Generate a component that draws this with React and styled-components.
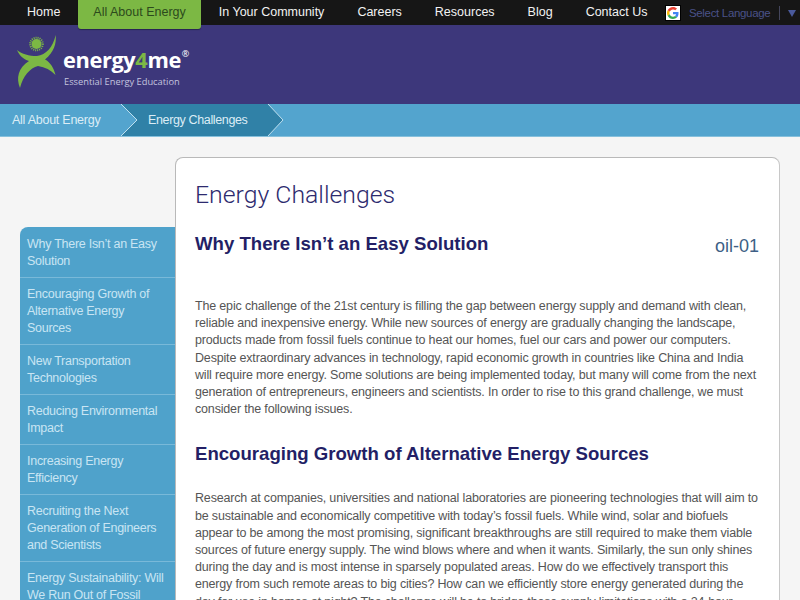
import React from 'react';
import styled, { createGlobalStyle } from 'styled-components';

const Global = createGlobalStyle`
  html, body { margin: 0; padding: 0; height: 600px; overflow: hidden; background: #f5f5f5; }
  body { font-family: "Liberation Sans", Arial, sans-serif; }
`;
const Nav = styled.nav`
  height: 25px; background: #161616; display: flex; align-items: flex-start; position: relative; z-index: 2; padding-left: 10.5px;
`;
const NavItem = styled.a`
  height: 25px; line-height: 25px; font-size: 12.5px; color: #f2f2f2; padding: 0 16.5px; flex: none;
`;
const ActiveItem = styled(NavItem)`
  height: 29px; color: #2c4a1c; background: #7cb844; border-radius: 0 0 3px 3px; box-shadow: 0 1px 1px rgba(0,0,0,.35); padding: 0 15px; margin: 0 1.5px;
`;
const Translate = styled.div`
  display: flex; align-items: center; height: 25px; margin-left: 1px; flex: none;
`;
const GoogleBox = styled.div`
  width: 16px; height: 16px; background: #fff; display: flex; align-items: center; justify-content: center; border: 1px solid #000; box-sizing: border-box; margin-top: 1px;
`;
const LangText = styled.span`
  margin-left: 8px; color: #4a5288; font-size: 11.5px; letter-spacing: -0.33px;
`;
const LangSep = styled.span`
  width: 1px; height: 14px; background: #44465c; margin-left: 9px;
`;
const LangArrow = styled.span`
  margin-left: 8px; width: 0; height: 0; border-left: 4px solid transparent; border-right: 4px solid transparent; border-top: 7px solid #4a5a9c; margin-top: 1px;
`;
const Masthead = styled.header`
  height: 79px; background: #3d377b; display: flex; align-items: flex-start; padding-left: 15px;
`;
const LogoMark = styled.svg`
  width: 44px; height: 56px; margin-top: 8px; flex: none;
`;
const LogoText = styled.div`
  margin-left: 4px; margin-top: 23px;
`;
const LogoName = styled.div`
  font-family: "Open Sans", sans-serif; font-weight: 700; font-size: 21.8px; line-height: 24px; color: #fff; letter-spacing: -0.4px; display: flex;
  b { color: #7cb844; font-weight: 700; }
  sup { font-size: 9px; line-height: 9px; font-weight: 400; margin-left: 1px; margin-top: 1px; letter-spacing: 0; }
`;
const Tagline = styled.div`
  font-family: "Open Sans", sans-serif; font-size: 9.3px; line-height: 12px; color: #c4c4df; margin-top: 4px; margin-left: 1px;
`;
const Crumbs = styled.div`
  height: 32px; background: #53a4ce; border-bottom: 1px solid #86c0dc; display: flex; color: #dcedf6; font-size: 12.5px; line-height: 32px; letter-spacing: -0.25px;
`;
const Crumb = styled.div`
  padding-left: 12px; width: 121px; box-sizing: border-box; flex: none;
`;
const CrumbCurrent = styled.div`
  position: relative; width: 147px; flex: none; padding-left: 27px; box-sizing: border-box; background: #3081a7; letter-spacing: -0.36px;
`;
const Chevrons = styled.svg`
  position: absolute; top: 0; width: 20px; height: 32px; overflow: visible;
  left: ${p => p.$left}px;
`;
const Body = styled.main`
  display: flex; align-items: flex-start; padding: 20px 20px 0 20px;
`;
const Side = styled.ul`
  list-style: none; margin: 70px 0 0; padding: 1px 0 0; width: 155px; flex: none; background: #4fa2cb; border-radius: 8px 0 0 0; box-sizing: border-box;
`;
const SideItem = styled.li`
  padding: 8px 8px 7px 7px; font-size: 12.5px; line-height: 17px; letter-spacing: -0.27px; color: #c9e5f3; border-top: ${p => p.$first ? 'none' : '1px solid #79b9d9'};
`;
const Card = styled.article`
  flex: 1; background: #fff; border: 1px solid #b9b9b9; border-right-color: #c8c8c8; border-radius: 8px 8px 0 0; padding: 20px 20px 0 19px; min-height: 600px;
`;
const Title = styled.h1`
  margin: 0; font-family: Roboto, sans-serif; font-weight: 300; font-size: 24.8px; line-height: 34px; color: #2d2a6e;
`;
const Head = styled.div`
  display: flex; justify-content: space-between; align-items: flex-start; margin-top: 20px;
`;
const H2 = styled.h2`
  margin: 0; font-size: 18.6px; line-height: 24px; font-weight: 700; color: #231f66;
`;
const Code = styled.div`
  font-size: 18px; line-height: 24px; color: #3d5f86; margin-top: 2px;
`;
const P = styled.p`
  margin: ${p => p.$top}px 0 0; font-size: 12.5px; line-height: 17.2px; letter-spacing: -0.17px; color: #555;
`;
const H2b = styled(H2)`
  margin-top: 24px;
`;

const nav = ['Home', 'All About Energy', 'In Your Community', 'Careers', 'Resources', 'Blog', 'Contact Us'];
const side = [
  'Why There Isn’t an Easy Solution',
  'Encouraging Growth of Alternative Energy Sources',
  'New Transportation Technologies',
  'Reducing Environmental Impact',
  'Increasing Energy Efficiency',
  'Recruiting the Next Generation of Engineers and Scientists',
  'Energy Sustainability: Will We Run Out of Fossil Fuels?',
];

export default function App() {
  return (
    <>
      <Global />
      <Nav>
        {nav.map(t => t === 'All About Energy' ? <ActiveItem key={t}>{t}</ActiveItem> : <NavItem key={t}>{t}</NavItem>)}
        <Translate>
          <GoogleBox>
            <svg width="12" height="12" viewBox="0 0 48 48">
              <path fill="#EA4335" d="M24 9.5c3.5 0 6.7 1.2 9.2 3.6l6.9-6.9C35.9 2.4 30.5 0 24 0 14.6 0 6.5 5.4 2.6 13.2l8 6.2C12.5 13.7 17.8 9.5 24 9.5z"/>
              <path fill="#4285F4" d="M46.1 24.5c0-1.6-.1-3.1-.4-4.5H24v9h12.4c-.5 2.9-2.2 5.4-4.6 7l7.7 6c4.5-4.2 6.6-10.3 6.6-17.500z"/>
              <path fill="#FBBC05" d="M10.5 28.6C10 27.2 9.8 25.6 9.8 24s.3-3.2.8-4.6l-8-6.2C.9 16.5 0 20.1 0 24s.9 7.5 2.6 10.8l7.900-6.200z"/>
              <path fill="#34A853" d="M24 48c6.5 0 11.9-2.1 15.9-5.8l-7.7-6c-2.1 1.4-4.9 2.3-8.2 2.3-6.2 0-11.5-4.2-13.400-9.900l-8 6.200C6.500 42.600 14.600 48 24 48z"/>
            </svg>
          </GoogleBox>
          <LangText>Select Language</LangText>
          <LangSep />
          <LangArrow />
        </Translate>
      </Nav>
      <Masthead>
        <LogoMark viewBox="15 33 44 56">
          <circle cx="36.5" cy="44" r="5" fill="#7cb844" />
          <circle cx="36.5" cy="44" r="6.3" fill="none" stroke="#7cb844" strokeWidth="2" strokeDasharray="1 1" />
          <path fill="#7cb844" d="M55.7 35 C56.5 44 54 52 45 59.5 C50 62 54 68 55.5 75 C51 70 45 67 38 66 C30 68 23 76 20 88 C16 78 18 68 29 61 C23 59 19 55 17 50 C22 54 29 56 37 56 C46 55 53 47 55.7 35 Z" />
        </LogoMark>
        <LogoText>
          <LogoName>energy<b>4</b>me<sup>®</sup></LogoName>
          <Tagline>Essential Energy Education</Tagline>
        </LogoText>
      </Masthead>
      <Crumbs>
        <Crumb>All About Energy</Crumb>
        <CrumbCurrent>
          Energy Challenges
          <Chevrons $left={0} viewBox="0 0 20 32">
            <path d="M0 0 L16 16 L0 32 Z" fill="#53a4ce" />
            <path d="M0 0 L16 16 L0 32" fill="none" stroke="#bfe0ef" strokeWidth="1" />
          </Chevrons>
          <Chevrons $left={147} viewBox="0 0 20 32">
            <path d="M0 0 L15 16 L0 32 Z" fill="#3081a7" />
            <path d="M0 0 L15 16 L0 32" fill="none" stroke="#bfe0ef" strokeWidth="1" />
          </Chevrons>
        </CrumbCurrent>
      </Crumbs>
      <Body>
        <Side>
          {side.map((s, i) => <SideItem key={s} $first={i === 0}>{s}</SideItem>)}
        </Side>
        <Card>
          <Title>Energy Challenges</Title>
          <Head>
            <H2>Why There Isn’t an Easy Solution</H2>
            <Code>oil-01</Code>
          </Head>
          <P $top={40}>The epic challenge of the 21st century is filling the gap between energy supply and demand with clean, reliable and inexpensive energy. While new sources of energy are gradually changing the landscape, products made from fossil fuels continue to heat our homes, fuel our cars and power our computers. Despite extraordinary advances in technology, rapid economic growth in countries like China and India will require more energy. Some solutions are being implemented today, but many will come from the next generation of entrepreneurs, engineers and scientists. In order to rise to this grand challenge, we must consider the following issues.</P>
          <H2b>Encouraging Growth of Alternative Energy Sources</H2b>
          <P $top={24}>Research at companies, universities and national laboratories are pioneering technologies that will aim to be sustainable and economically competitive with today’s fossil fuels. While wind, solar and biofuels appear to be among the most promising, significant breakthroughs are still required to make them viable sources of future energy supply. The wind blows where and when it wants. Similarly, the sun only shines during the day and is most intense in sparsely populated areas. How do we effectively transport this energy from such remote areas to big cities? How can we efficiently store energy generated during the day for use in homes at night? The challenge will be to bridge these supply limitations with a 24-hour</P>
        </Card>
      </Body>
    </>
  );
}
